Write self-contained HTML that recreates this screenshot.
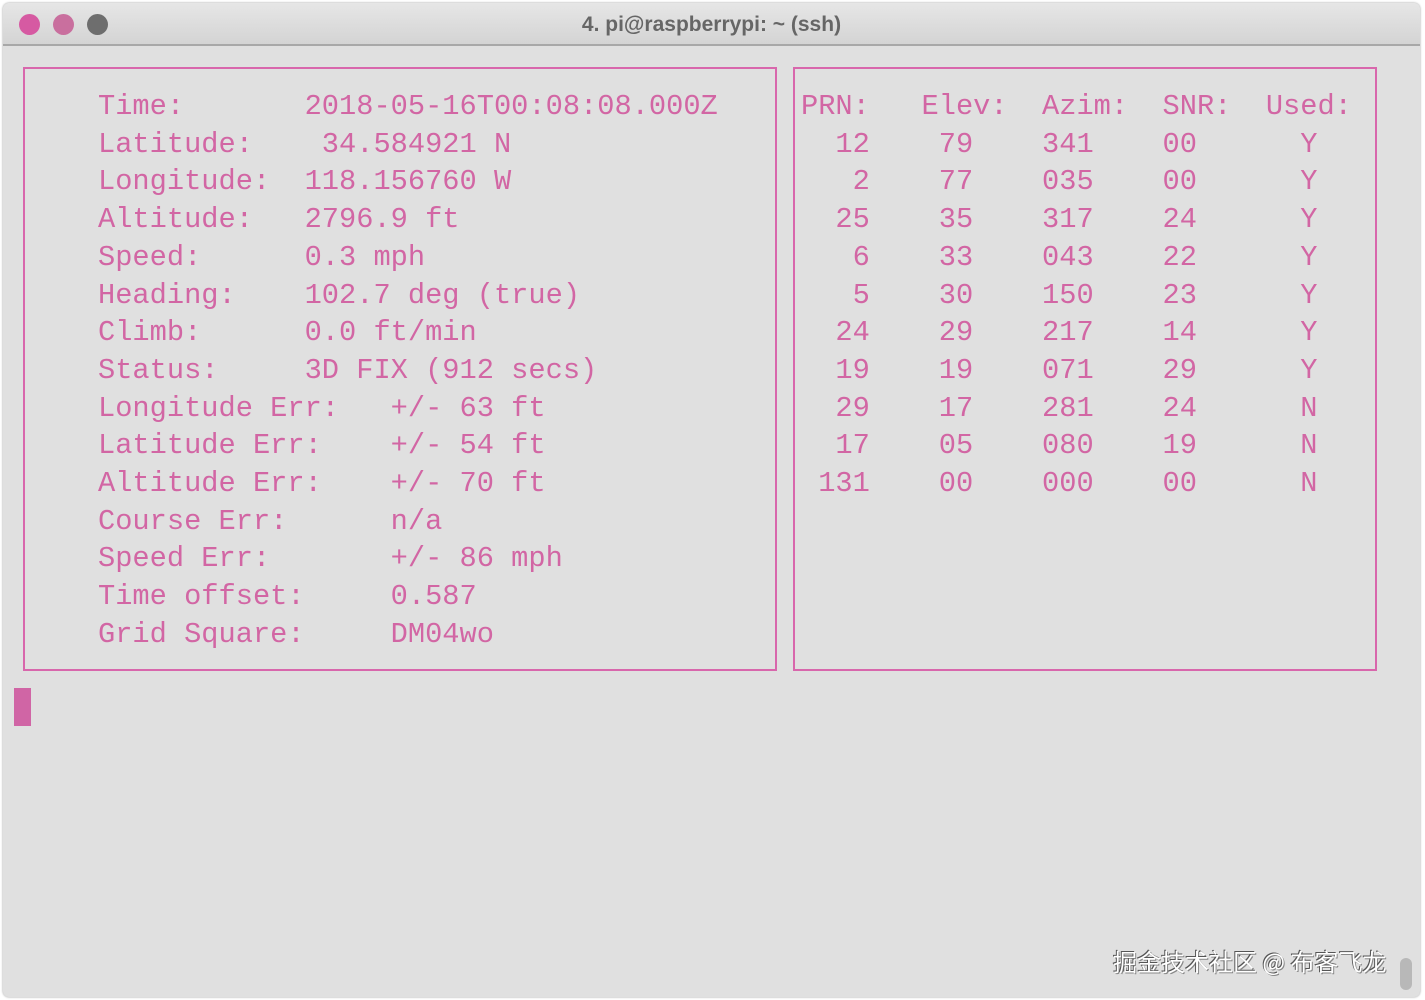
<!DOCTYPE html>
<html><head><meta charset="utf-8"><style>
html,body{margin:0;padding:0;width:1425px;height:1000px;overflow:hidden;background:#fff}
.win{position:absolute;left:3px;top:3px;width:1417px;height:994px;background:#e0e0e0;border-radius:6px;overflow:hidden;box-shadow:0 0 2px #999}
.tb{position:absolute;left:0;top:0;right:0;height:41px;background:linear-gradient(#e6e6e6,#d4d4d4);border-bottom:2px solid #a8a8a8;text-align:center;font:bold 21px "Liberation Sans",sans-serif;color:#666;line-height:44px}
.dot{position:absolute;top:11px;width:21px;height:21px;border-radius:50%}
.box{position:absolute;border:2px solid #d867ac;top:64px;height:600px}
pre{position:absolute;margin:0;font-family:"Liberation Mono",monospace;font-size:28.7px;line-height:37.7px;color:#d266a4}
.wm{position:absolute;left:1110px;top:940px;font:24px "Noto Sans CJK SC",sans-serif;color:#fff;text-shadow:-1px -1px 0 #555,1px 1px 0 #888;}
</style></head><body>
<div class="win">
<div class="tb">4. pi@raspberrypi: ~ (ssh)
<div class="dot" style="left:16px;background:#d65aa2"></div>
<div class="dot" style="left:50px;background:#c96f9e"></div>
<div class="dot" style="left:84px;background:#6e6e6e"></div>
</div>
<div class="box" style="left:20px;width:750px"></div>
<div class="box" style="left:790px;width:580px"></div>
<pre style="left:95px;top:85px">Time:       2018-05-16T00:08:08.000Z
Latitude:    34.584921 N
Longitude:  118.156760 W
Altitude:   2796.9 ft
Speed:      0.3 mph
Heading:    102.7 deg (true)
Climb:      0.0 ft/min
Status:     3D FIX (912 secs)
Longitude Err:   +/- 63 ft
Latitude Err:    +/- 54 ft
Altitude Err:    +/- 70 ft
Course Err:      n/a
Speed Err:       +/- 86 mph
Time offset:     0.587
Grid Square:     DM04wo</pre>
<pre style="left:798px;top:85px">PRN:   Elev:  Azim:  SNR:  Used:
  12    79    341    00      Y
   2    77    035    00      Y
  25    35    317    24      Y
   6    33    043    22      Y
   5    30    150    23      Y
  24    29    217    14      Y
  19    19    071    29      Y
  29    17    281    24      N
  17    05    080    19      N
 131    00    000    00      N</pre>
<div style="position:absolute;left:11px;top:685px;width:17px;height:38px;background:#d065a5"></div>
<div class="wm">掘金技术社区 @ 布客飞龙</div>
<div style="position:absolute;left:1397px;top:955px;width:12px;height:32px;border-radius:6px;background:#b8b8b8"></div>
</div>
</body></html>
